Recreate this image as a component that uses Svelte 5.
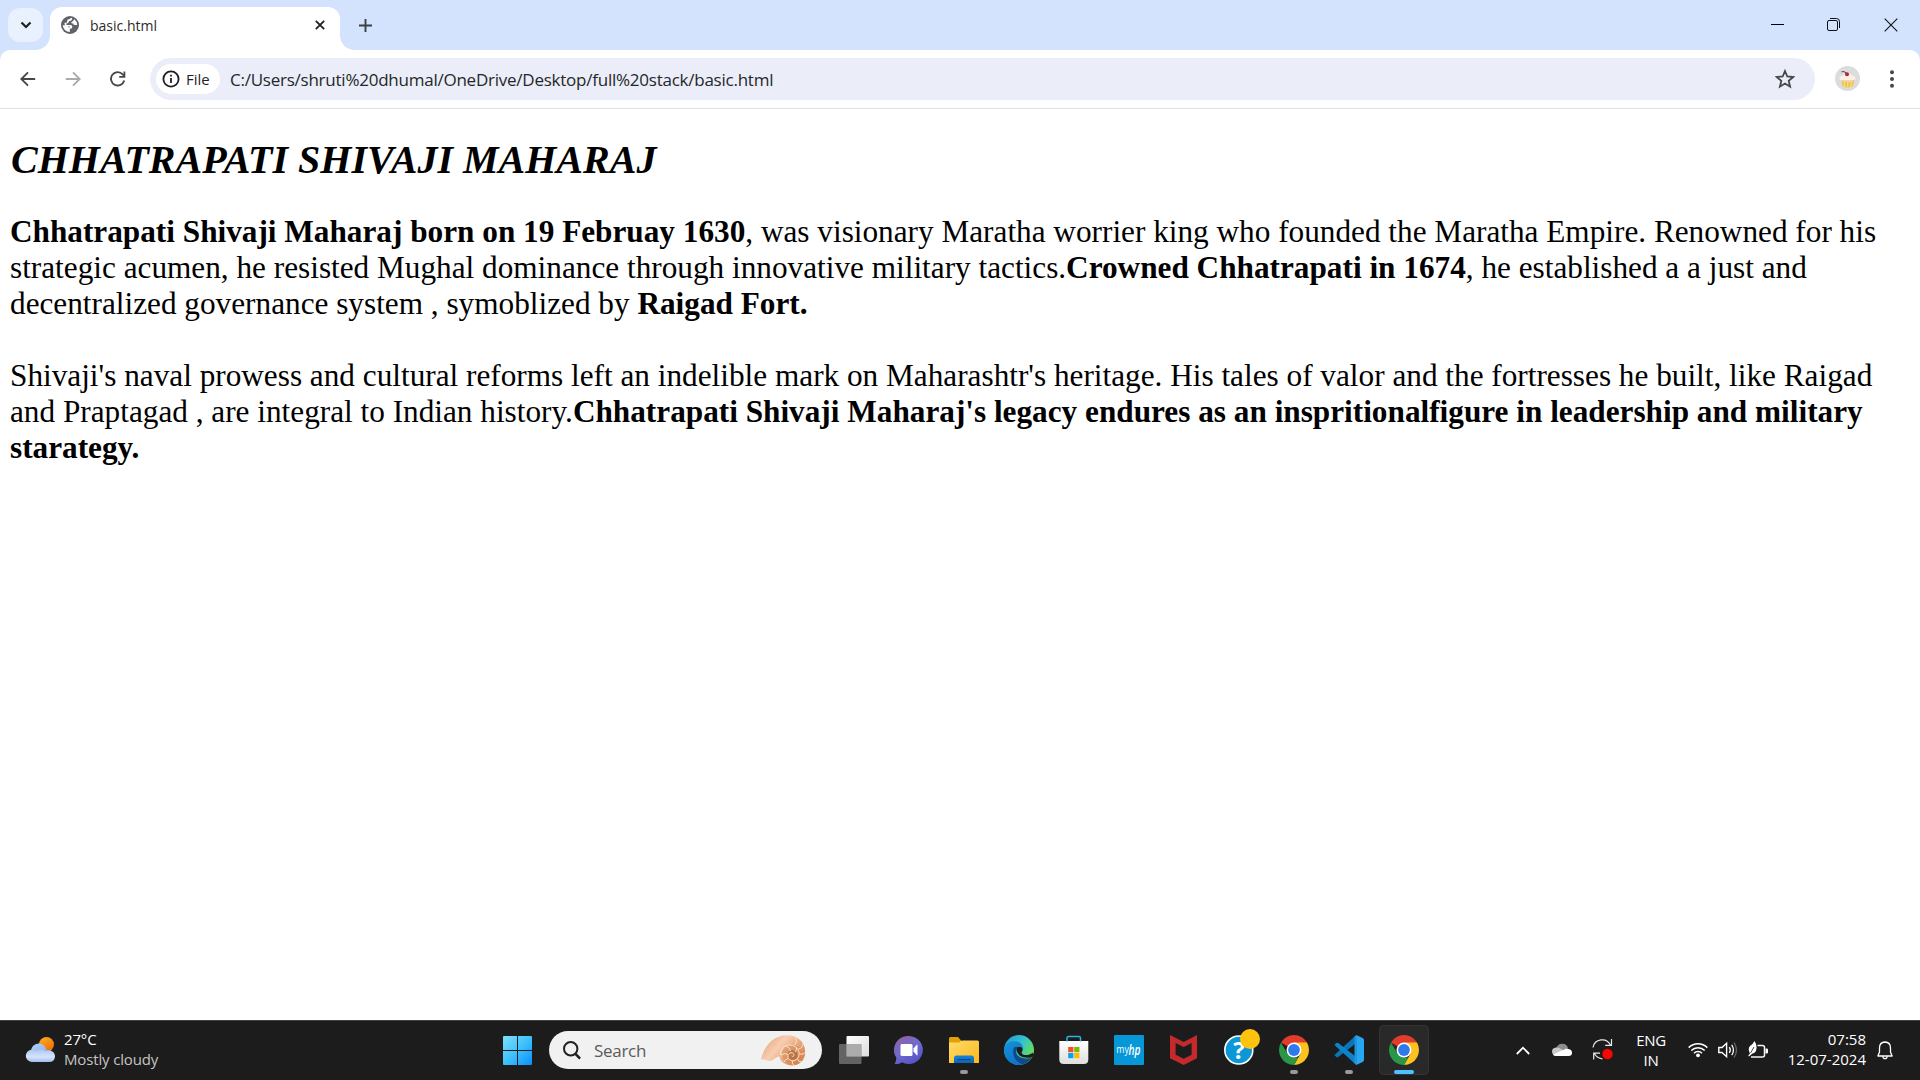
<script>
  const apps = [
    { id: 'taskview' },
    { id: 'chat' },
    { id: 'files', state: 'open' },
    { id: 'edge' },
    { id: 'store' },
    { id: 'myhp' },
    { id: 'mcafee' },
    { id: 'help' },
    { id: 'chrome', state: 'open' },
    { id: 'code', state: 'open' },
    { id: 'chrome', state: 'active' }
  ];
</script>

{#snippet appIcon(id)}
  <svg width="30" height="30" viewBox="0 0 30 30">
    {#if id === 'taskview'}
      <rect x="7.5" y="1" width="22.5" height="20.5" rx="1" fill="url(#tvw)" />
      <rect x="0" y="9" width="22.5" height="20" rx="1" fill="#777" fill-opacity=".78" />
      <rect x="7.5" y="9" width="15" height="12.5" fill="#b4b4b4" fill-opacity=".75" />
    {:else if id === 'chat'}
      <path d="M15 1a14 14 0 1 1-7 26.2C5.500 29 3 29.300.6 28.800 2 27 2.300 25 2.300 22.600A14 14 0 0 1 15 1Z" fill="url(#cht)" />
      <rect x="6.500" y="9" width="12" height="12" rx="1.500" fill="#fff" />
      <path d="M19.500 13.500 22.800 9.800q.7-.5.7.3v9.800q0 .8-.7.3L19.500 16.600Z" fill="#fff" />
    {:else if id === 'files'}
      <path d="M0 3.500Q0 2 1.500 2H9l3.500 4H28.500v6H0Z" fill="#e3a008" />
      <path d="M0 7.500H10L13 5.500H28.500Q30 5.500 30 7V28H0Z" fill="url(#fld)" />
      <path d="M5 28V23q0-2.500 2.500-2.500h15Q25 20.500 25 23v5Z" fill="url(#fdb)" />
      <path d="M8.500 24.600h13" stroke="#0a4a87" stroke-width="1.200" />
    {:else if id === 'edge'}
      <circle cx="15" cy="15" r="15" fill="url(#edt)" />
      <path d="M0 15C.3 8.500 6 6.200 10.600 6.200 17 6.200 19.500 11 19 14.500 18.700 12.800 17 11.500 15.300 11.600 11 11.800 9.800 17 11.500 20.500 13.500 25.500 21.500 26.500 27.500 22.500 24.500 27.600 20 30 15 30 6.500 30 0 23.500 0 15Z" fill="url(#edl)" />
      <path d="M10 12.500C7.500 18 10 27 19 29.200 23 28 26 25.500 27.800 22.200 21.500 25.200 12 22.500 12 16Q12 13.500 13.500 12Q11.500 11.200 10 12.500Z" fill="#114a8b" />
      <path d="M12.400 13.400C13.500 11 17.800 11 18.700 14 19 15.500 17.500 16.500 17.700 17.900 18.200 20.600 24.500 21 28.600 17.800L30.500 20 27.800 22.300Q20 24 15.500 20.500Q12 17 12.400 13.400Z" fill="#1c1c1c" />
    {:else if id === 'store'}
      <path d="M.3 6h29v18.500q0 4.500-4.500 4.500H4.800Q.3 29 .3 24.500Z" fill="url(#str)" />
      <path d="M8 6.500V3Q8 1.500 9.500 1.500h10.500Q21.500 1.500 21.500 3v3.500" fill="none" stroke="#28b2e8" stroke-width="1.500" />
      <path d="M9.200 12h5.200v5.200H9.200z" fill="#f25022" /><path d="M15.200 12h5.200v5.200h-5.200z" fill="#7fba00" />
      <path d="M9.200 18h5.200v5.200H9.200z" fill="#00a4ef" /><path d="M15.200 18h5.200v5.200h-5.200z" fill="#ffb900" />
    {:else if id === 'myhp'}
      <rect width="30" height="30" rx="1" fill="#0597d7" />
      <text class="my" x="2.300" y="18.200" textLength="12.500" lengthAdjust="spacingAndGlyphs">my</text>
      <text class="hp" x="14.600" y="19.500" textLength="12" lengthAdjust="spacingAndGlyphs">hp</text>
    {:else if id === 'mcafee'}
      <path d="M1 0 14.700 7 28 0V23.200L14.700 30 1 23.200ZM6.600 8V19.700L14.700 23.700 22.600 19.700V8L14.700 12Z" fill="#c42a2c" fill-rule="evenodd" />
    {:else if id === 'help'}
      <circle cx="14.800" cy="15" r="14" fill="#0c98d8" stroke="#fff" stroke-width="1.600" />
      <text class="q" x="15" y="24" text-anchor="middle">?</text>
    {:else if id === 'chrome'}
      <path d="M15 15 2.010 7.500A15 15 0 0 1 27.990 7.500Z" fill="#e33b2e" />
      <path d="M15 7.500H27.990A15 15 0 0 1 15 30L21.500 18.700Z" fill="#fcc31e" />
      <path d="M2.010 7.500 8.500 18.700 15 22.500H19.300L15 30A15 15 0 0 1 2.010 7.500Z" fill="#2a9747" />
      <circle cx="15" cy="15" r="7.500" fill="#fff" /><circle cx="15" cy="15" r="5.900" fill="#3079ea" />
    {:else if id === 'code'}
      <path d="M1 19.400 22 .2V8.300L4.200 22q-1 .7-1.800 0L.7 20.600q-.7-.6.3-1.200Z" fill="#0975ba" />
      <path d="M1 10.600 22 29.800V21.700L4.200 8q-1-.7-1.800 0L.7 9.400q-.7.600.3 1.200Z" fill="#0d83cc" />
      <path d="M22.200 0 28.600 3Q30 3.700 30 5V25q0 1.300-1.400 2L22.200 30Z" fill="#27a7f2" />
      <path d="M22.500 0 20.500 1.500V28.500L22.500 30Z" fill="#1f97df" />
    {/if}
  </svg>
{/snippet}

<svg class="defs" width="0" height="0">
  <defs>
    <linearGradient id="tvw" x2="1" y2="1"><stop stop-color="#fff" /><stop offset="1" stop-color="#ddd" /></linearGradient>
    <linearGradient id="cht" x1=".1" x2=".7" y2="1"><stop stop-color="#9560a0" /><stop offset=".5" stop-color="#6e6bcb" /><stop offset="1" stop-color="#5552c8" /></linearGradient>
    <linearGradient id="fld" x2="1" y2="1"><stop stop-color="#ffdc6e" /><stop offset="1" stop-color="#fbb917" /></linearGradient>
    <linearGradient id="fdb" x2="0" y2="1"><stop stop-color="#1683dc" /><stop offset="1" stop-color="#0c65b4" /></linearGradient>
    <linearGradient id="edt" x2="1" y2=".6"><stop offset=".1" stop-color="#279bd8" /><stop offset=".55" stop-color="#33c3cf" /><stop offset="1" stop-color="#6ce04e" /></linearGradient>
    <linearGradient id="edl" x2=".7" y2="1"><stop stop-color="#1592d8" /><stop offset="1" stop-color="#0b6fc9" /></linearGradient>
    <linearGradient id="str" x2="0" y2="1"><stop stop-color="#fff" /><stop offset="1" stop-color="#dedede" /></linearGradient>
    <linearGradient id="win" x2="1" y2="1"><stop stop-color="#7fdffc" /><stop offset=".5" stop-color="#3fc1fb" /><stop offset="1" stop-color="#0a90fb" /></linearGradient>
    <linearGradient id="sun" x2=".7" y2="1"><stop stop-color="#fbb41c" /><stop offset="1" stop-color="#ee6c0c" /></linearGradient>
    <linearGradient id="cld" x2="0" y2="1"><stop stop-color="#a9c6f5" /><stop offset=".6" stop-color="#d7e4f8" /><stop offset="1" stop-color="#9fbdf0" /></linearGradient>
    <linearGradient id="cl2" x2="1" y2="1"><stop stop-color="#b5cffa" /><stop offset="1" stop-color="#7fa6ea" /></linearGradient>
    <linearGradient id="shl" x2="1" y2=".6"><stop stop-color="#e39a74" /><stop offset=".45" stop-color="#f8cdb0" /><stop offset="1" stop-color="#d98958" /></linearGradient>
  </defs>
</svg>

<div class="screen">
  <div class="tabs">
    <div class="tabsearch">
      <svg width="12" height="8" viewBox="0 0 12 8"><path d="M1.500 1.500 6 6l4.500-4.500" fill="none" stroke="#1f1f1f" stroke-width="2.200" /></svg>
    </div>
    <div class="tab">
      <svg width="18" height="18" viewBox="2 2 20 20">
        <path d="M12 2C6.480 2 2 6.480 2 12s4.480 10 10 10 10-4.480 10-10S17.520 2 12 2zm-1 17.930c-3.950-.49-7-3.850-7-7.930 0-.62.08-1.210.21-1.790L9 15v1c0 1.100.9 2 2 2v1.930zm6.900-2.540c-.26-.81-1-1.390-1.900-1.390h-1v-3c0-.55-.45-1-1-1H8v-2h2c.55 0 1-.45 1-1V7h2c1.100 0 2-.9 2-2v-.41c2.930 1.190 5 4.060 5 7.410 0 2.080-.8 3.970-2.100 5.390z" fill="none" />
        <circle cx="12" cy="12" r="10" fill="#5f6368" />
        <path d="M14.500 4.200C14.500 6.600 13 7.600 10.800 7.600 10.800 9.400 10 10 8 10.200V12H12.500Q14.600 12 14.600 14T12.500 16.300H11.800V19.900A8 8 0 0 1 4 12.300H8Q10.200 12.500 10 14.600L11.800 14.500V13.600H8.500Q6 13.300 6 11V9.500H8.600V8Q8.800 5.400 11.500 5.400Q12.500 5.300 12.600 4.100Z" fill="#fff" />
        <path d="M16.800 5.600A8 8 0 0 1 20 12H17.500Q15.600 12 15.500 10.200 13.200 10.200 13.300 8.900 15.200 8.300 16.800 5.600Z" fill="#fff" />
      </svg>
      <span class="ui tabname">basic.html</span>
      <svg class="x" width="10" height="10" viewBox="0 0 10 10"><path d="m.8.8 8.400 8.400M9.200.8.8 9.200" stroke="#1f1f1f" stroke-width="1.800" /></svg>
    </div>
    <svg class="plus" width="13" height="13" viewBox="0 0 13 13"><path d="M6.500 0v13M0 6.500h13" stroke="#3c3f43" stroke-width="1.900" /></svg>
    <div class="winctl">
      <svg width="13" height="14" viewBox="0 0 13 14"><path d="M0 6.500h13" stroke="#000" stroke-width="1" /></svg>
      <svg width="13" height="13" viewBox="0 0 13 13"><rect x=".5" y="2.500" width="10" height="10" rx="1.500" fill="none" stroke="#111" /><path d="M3 .5h6.500q3 0 3 3V10" fill="none" stroke="#111" /></svg>
      <svg class="close" width="14" height="14" viewBox="0 0 14 14"><path d="m.7.7 12.600 12.600M13.300.7.7 13.300" stroke="#111" stroke-width="1.100" /></svg>
    </div>
  </div>

  <div class="toolwrap">
    <div class="toolbar">
      <svg class="nav" width="16" height="16" viewBox="0 0 16 16"><path d="M15.200 8H2M8 1.300 1.300 8 8 14.700" fill="none" stroke="#474747" stroke-width="1.900" /></svg>
      <svg class="nav" width="16" height="16" viewBox="0 0 16 16"><path d="M.8 8H14M8 1.300 14.700 8 8 14.700" fill="none" stroke="#ababab" stroke-width="1.900" /></svg>
      <svg class="nav" width="16" height="16" viewBox="0 0 16 16"><path d="M14.200 9.500A6.700 6.700 0 1 1 12.700 3.300L14.400 5" fill="none" stroke="#474747" stroke-width="1.900" /><path d="M15.300.6V6.700H9.200V4.900h4.300V.6Z" fill="#474747" /></svg>
      <div class="omni">
        <div class="chip">
          <svg width="18" height="18" viewBox="0 0 18 18"><circle cx="9" cy="9" r="7.600" fill="none" stroke="#1f1f1f" stroke-width="1.800" /><path d="M9 8v5M9 4.800v1.800" stroke="#1f1f1f" stroke-width="1.800" /></svg>
          <span class="ui file">File</span>
        </div>
        <span class="ui url">C:/Users/shruti%20dhumal/OneDrive/Desktop/full%20stack/basic.html</span>
        <svg class="star" width="20" height="20" viewBox="0 0 20 20"><path d="m10 2 2.300 5.500 6 .5-4.600 3.900 1.400 5.800L10 14.600l-5.100 3.100 1.400-5.800L1.700 8l6-.5Z" fill="none" stroke="#474747" stroke-width="1.800" /></svg>
      </div>
      <svg class="avatar" width="25" height="25" viewBox="0 0 25 25">
        <circle cx="12.500" cy="12.500" r="12.500" fill="#dcdcdc" />
        <path d="M6 14h13.500L17.500 20.500q-5 2-9.500 0Z" fill="#eec548" /><path d="M9 15l.8 6M12.700 15v6.500M16.500 15l-.8 6" stroke="#f7df88" stroke-width="1.100" />
        <path d="M5 14q-1.500-2.500 1.500-4 2-2.500 6-2.500t6 2.500q3 1.500 1.500 4-2 1.800-4 1-2 1.500-4 0-2 1-3.500 0-2 .5-3.500-1Z" fill="#fbf0e4" />
        <path d="M6 14q2 1.500 3.500.5 2 1 3.500 0 2 1.200 3.500 0 1.500.8 3-.5" fill="none" stroke="#e0bfa6" stroke-width=".8" />
        <circle cx="12" cy="8.300" r="2" fill="#b92635" /><path d="M11.500 7Q9 4.800 6.500 5.800" fill="none" stroke="#57443f" />
      </svg>
      <svg class="dots" width="4" height="18" viewBox="0 0 4 18"><g fill="#474747"><circle cx="2" cy="2.200" r="2" /><circle cx="2" cy="9" r="2" /><circle cx="2" cy="15.800" r="2" /></g></svg>
    </div>
  </div>

  <main>
    <h1>CHHATRAPATI SHIVAJI MAHARAJ</h1>
    <p>
      <span class="line"><b>Chhatrapati Shivaji Maharaj born on 19 Februay 1630</b>, was visionary Maratha worrier king who founded the Maratha Empire. Renowned for his</span>
      <span class="line">strategic acumen, he resisted Mughal dominance through innovative military tactics.<b>Crowned Chhatrapati in 1674</b>, he established a a just and</span>
      <span class="line">decentralized governance system , symoblized by <b>Raigad Fort.</b></span>
    </p>
    <p>
      <span class="line">Shivaji's naval prowess and cultural reforms left an indelible mark on Maharashtr's heritage. His tales of valor and the fortresses he built, like Raigad</span>
      <span class="line">and Praptagad , are integral to Indian history.<b>Chhatrapati Shivaji Maharaj's legacy endures as an inspritionalfigure in leadership and military</b></span>
      <span class="line"><b>starategy.</b></span>
    </p>
  </main>

  <footer>
    <div class="weather">
      <svg width="30" height="26" viewBox="0 0 30 26">
        <circle cx="21.500" cy="7.500" r="7.500" fill="url(#sun)" />
        <path d="M6 14a7.800 7.800 0 0 1 15.500-1Q27 14 27 18L6 20Z" fill="url(#cl2)" />
        <path d="M6.500 25A6.200 6.200 0 0 1 6 12.700Q9 12 11 14.500 13 11.500 17 12.500q2.500.5 3.800 2Q23 12.500 25.500 13.500 30 15 30 19.500 29.500 25 24 25Z" fill="url(#cld)" />
      </svg>
      <div class="ui wtext"><span class="temp">27°C</span><span class="cond">Mostly cloudy</span></div>
    </div>
    <div class="center">
      <svg class="start" width="29" height="29" viewBox="0 0 29 29"><path d="M1 0h13v14H0V1q0-1 1-1ZM15 0h13q1 0 1 1v13H15ZM0 15h14v14H1q-1 0-1-1ZM15 15h14v13q0 1-1 1H15Z" fill="url(#win)" /></svg>
      <div class="search">
        <svg width="18" height="19" viewBox="0 0 18 19"><circle cx="7.700" cy="7.700" r="6.700" fill="none" stroke="#222" stroke-width="2" /><path d="m12.500 12.800 4.600 4.800" stroke="#222" stroke-width="2.600" /></svg>
        <span class="ui stext">Search</span>
        <svg class="shell" width="45" height="31" viewBox="0 0 45 31">
          <path d="M0 24.500C4 7 16 0 26 .3 37 .5 44 7 44.200 17 44.300 25.500 38 30.500 31 30.500 25 30.500 19 27 18.500 21.500 15 21 13 25.500 9 25.800 5 26 3 23.500 0 24.500Z" fill="url(#shl)" />
          <circle cx="31" cy="19.500" r="10" fill="#cf8252" fill-opacity=".5" />
          <circle cx="31.500" cy="20" r="5" fill="#9a5a2c" fill-opacity=".5" />
          <g fill="none" stroke="#fbe3bd" stroke-width="1">
            <path d="M19.500 20C19 11 28 8 34 11.500c5 3 5.500 10 1.500 13-4 2.800-9 .5-8.500-3.800.5-3.500 5.500-4 6-1 .2 1.500-1.500 2.300-2.300 1.200" />
            <path d="M33 10.500Q37 7 34.500 2.500M37.500 14q4.500-1 4.500-6M39 19q3.500 1 5 -1.500M36.500 24q1 3.500 4 2.500M31.500 25.500q-1 3 1.500 4.800M27.500 23.500q-3.500.5-4.500 3.500M27 19.500q-3-2-7 .5M29.500 16q-1-4-4.500-5M34 17q2-2 1.500-5" />
          </g>
        </svg>
      </div>
      <div class="apps">
        {#each apps as app}
          <div class="app" class:active={app.state === 'active'}>
            {@render appIcon(app.id)}
            {#if app.id === 'help'}<i class="badge"></i>{/if}
            {#if app.state}<i class="mark"></i>{/if}
          </div>
        {/each}
      </div>
    </div>
    <div class="tray">
      <svg class="t1" width="14" height="9" viewBox="0 0 14 9"><path d="M.8 8 7 1.700 13.200 8" fill="none" stroke="#fff" stroke-width="1.800" /></svg>
      <svg class="t2" width="20" height="14" viewBox="0 0 20 14"><path d="M4.500 5A6 6 0 0 1 16 5L10 9Z" fill="#8d8d8d" /><path d="M4 12Q0 12 0 8.500 0 5 4 4.500 7 4 9 6L17 10 10 13Z" fill="#c9c9c9" /><path d="M4 13Q1.800 13 .8 11.500L12.500 6.500Q14.500 4.800 16.500 6 20 6.500 20 9.700 20 13 16.500 13Z" fill="#fff" /></svg>
      <svg class="t3" width="22" height="22" viewBox="0 0 22 22"><path d="M1 8.500A9.300 9.300 0 0 1 18.500 6M19.500 0v6.300H13.200M1.700 20.500V14.200H8M2.500 14.800Q5 19.300 10.500 19.800" fill="none" stroke="#e8e8e8" stroke-width="1.200" /><circle cx="15.500" cy="15" r="5.200" fill="#fa0505" /></svg>
      <div class="ui lang"><span>ENG</span><span>IN</span></div>
      <svg class="t4" width="20" height="16" viewBox="0 0 20 16"><g fill="none" stroke="#fff" stroke-width="1.600"><path d="M.7 5.600a13.200 13.200 0 0 1 18.600 0M3.300 8.500a9.500 9.500 0 0 1 13.400 0M6 11.200a5.700 5.700 0 0 1 8 0" /></g><circle cx="10" cy="13.300" r="1.900" fill="#fff" /></svg>
      <svg class="t5" width="20" height="18" viewBox="0 0 20 18"><path d="M.8 6.500H4L8.600 2.300V15.700L4 11.500H.8Z" fill="none" stroke="#fff" stroke-width="1.400" /><path d="M11.300 6.200q2 2.800 0 5.600M13.700 3.800q3.500 5.200 0 10.400" fill="none" stroke="#fff" stroke-width="1.300" /><path d="M16 1.500q5 7.500 0 15" fill="none" stroke="#666" stroke-width="1.300" /></svg>
      <svg class="t6" width="20" height="18" viewBox="0 0 20 18"><path d="M9.500 4.500h5q2 0 2 2v7.500q0 2-2 2H3" fill="none" stroke="#f5f5f5" stroke-width="1.500" /><path d="M17.500 7.500h1.200q1.300 0 1.300 1.300v2.400q0 1.300-1.300 1.300h-1.200Z" fill="#fff" /><path d="M6.500 0Q9 3.500 8.500 7.500 8 12 4.500 12.500L1 15.500.2 14.800 2 12.500Q-.5 8 2 5Q5 3 6.500 0Z" fill="#fff" /><path d="m2.500 12 3.500-6" stroke="#1c1c1c" stroke-width=".8" /></svg>
      <div class="ui clock"><span class="time">07:58</span><span class="date">12-07-2024</span></div>
      <svg class="bell" width="16" height="19" viewBox="0 0 16 19"><path d="M8 1Q2.500 1.300 2.500 7v4L.9 15h14.200L13.500 11V7Q13.500 1.300 8 1Z" fill="none" stroke="#fff" stroke-width="1.300" stroke-linejoin="round" /><path d="M5.800 15.200Q6 17.700 8 17.700t2.200-2.500" fill="none" stroke="#fff" stroke-width="1.300" /></svg>
    </div>
  </footer>
</div>

<style>
  :global(body) { margin: 0; overflow: hidden; }
  svg { display: block; flex: none; }
  .defs { position: absolute; }
  .screen { width: 1920px; height: 1080px; display: flex; flex-direction: column; background: #fff; overflow: hidden; }
  .ui { font-family: "Open Sans", "Noto Sans", sans-serif; white-space: nowrap; }

  .tabs { height: 50px; flex: none; display: flex; background: #d3e3fd; box-sizing: border-box; padding-left: 8px; }
  .tabsearch { width: 35px; height: 34px; margin-top: 8px; border-radius: 12px; background: #e9f0fe; display: grid; place-items: center; }
  .tab { position: relative; box-sizing: border-box; width: 290px; height: 43px; margin: 7px 0 0 7px; padding: 0 15px 7px 11px; background: #fff; border-radius: 12px 12px 0 0; display: flex; align-items: center; }
  .tab::before, .tab::after { content: ""; position: absolute; bottom: 0; width: 14px; height: 14px; }
  .tab::before { left: -14px; background: radial-gradient(circle at 0 0, transparent 13.5px, #fff 14px); }
  .tab::after { right: -14px; background: radial-gradient(circle at 100% 0, transparent 13.5px, #fff 14px); }
  .tabname { margin-left: 11px; padding-top: 1px; font-size: 14px; letter-spacing: 0; color: #2b2b2b; line-height: 20px; }
  .x { margin-left: auto; }
  .plus { margin: 19px 0 0 19px; }
  .winctl { margin: 18px 22px 0 auto; display: flex; gap: 43px; height: 14px; }
  .close { margin-left: 1px; }

  .toolwrap { flex: none; background: #d3e3fd; }
  .toolbar { box-sizing: border-box; height: 59px; background: #fff; border-bottom: 1px solid #dedfe1; border-radius: 10px 10px 0 0; display: flex; align-items: center; padding-left: 20px; }
  .nav { margin-right: 29px; }
  .omni { width: 1665px; height: 42px; box-sizing: border-box; margin-left: -5px; padding: 0 20px 0 6px; border-radius: 21px; background: #ebeef8; display: flex; align-items: center; }
  .chip { width: 64px; height: 30px; border-radius: 15px; background: #fff; box-sizing: border-box; padding-left: 6px; display: flex; align-items: center; }
  .file { margin-left: 6px; font-size: 15px; letter-spacing: 0; color: #1f1f1f; }
  .url { margin-left: 10px; font-size: 17px; letter-spacing: -0.24px; color: #25272a; }
  .star { margin-left: auto; }
  .avatar { margin: 0 0 2px 20px; }
  .dots { margin-left: 30px; }

  main { flex: 1; padding: 27px 10px 0; font-family: "Liberation Serif", serif; color: #000; }
  h1 { margin: 0 0 30px 1px; font-size: 40px; line-height: 48px; font-style: italic; font-weight: 700; white-space: nowrap; }
  p { margin: 0 0 36px; font-size: 31.25px; line-height: 36px; }
  .line { display: block; width: max-content; white-space: nowrap; }

  footer { flex: none; height: 60px; box-sizing: border-box; padding-bottom: 1px; background: #1c1c1c; border-top: 1px solid #3d4142; display: flex; color: #fff; }
  .weather { width: 478px; padding-left: 25px; display: flex; align-items: center; }
  .wtext { margin-left: 9px; padding-bottom: 3px; display: flex; flex-direction: column; font-size: 15px; line-height: 20px; letter-spacing: -0.15px; }
  .cond { color: #c4c4c4; }
  .center { display: flex; align-items: center; }
  .search { width: 273px; height: 38px; box-sizing: border-box; margin: 0 4.5px 0 17px; padding: 0 16px 0 14px; border-radius: 19px; background: #f1f1f1; display: flex; align-items: center; }
  .stext { margin-left: 13px; font-size: 17px; letter-spacing: -0.3px; color: #5b5b5b; }
  .shell { margin-left: auto; }
  .apps { display: flex; gap: 5px; padding-left: 2.5px; }
  .app { position: relative; width: 50px; height: 50px; box-sizing: border-box; border-radius: 5px; display: grid; place-items: center; }
  .active { background: #292929; box-shadow: inset 0 0 0 1px #343434; }
  .mark { position: absolute; bottom: 1px; left: 21px; width: 8px; height: 4px; border-radius: 2px; background: #999; }
  .active .mark { left: 15px; width: 20px; background: #4cc2ff; }
  .badge { position: absolute; left: 26px; top: 4px; width: 20px; height: 20px; border-radius: 50%; background: #ffc20d; }
  .my { font: 400 10px "Open Sans", sans-serif; fill: #fff; }
  .hp { font: italic 600 14px "Open Sans", sans-serif; fill: #fff; }
  .q { font: 700 24px "Open Sans", sans-serif; fill: #fff; }

  .tray { margin-left: auto; padding-right: 27px; display: flex; align-items: center; }
  .lang, .clock { display: flex; flex-direction: column; padding-bottom: 1px; font-size: 15px; line-height: 20px; }
  .lang { width: 44px; align-items: center; margin: 0 15px; letter-spacing: -0.3px; }
  .clock { width: 86px; padding-bottom: 2px; align-items: flex-end; margin: 0 11px 0 12px; letter-spacing: 0; }
  .t2 { margin-left: 22px; }
  .t3 { margin-left: 20px; }
  .t5, .t6 { margin-left: 10px; }
</style>
